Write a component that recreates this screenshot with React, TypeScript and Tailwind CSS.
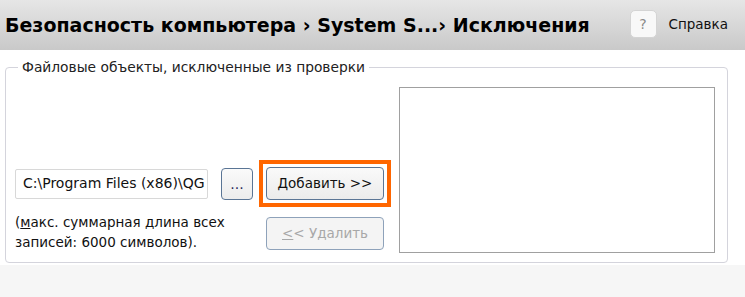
import React from "react";

export default function App() {
  const font = { fontFamily: "Tahoma, 'DejaVu Sans', sans-serif" };
  return (
    <div className="w-[745px] h-[297px] bg-[#f6f6f6] flex flex-col overflow-hidden" style={font}>
      <div className="h-[50px] bg-gradient-to-b from-[#e6e6e6] to-[#c9c9c9] flex items-center pl-[5px] pr-[17px]">
        <div className="text-[19px] font-bold text-black whitespace-nowrap">
          Безопасность компьютера › System S...› Исключения
        </div>
        <div className="ml-auto flex items-center gap-[12px] mt-[-2px]">
          <div className="w-[27px] h-[28px] rounded-[5px] border border-[#d4d4d4] bg-[#f8f8f8] flex items-center justify-center text-[14px] text-[#8a8a8a]">
            ?
          </div>
          <div className="text-[13.5px] text-[#111]">Справка</div>
        </div>
      </div>
      <div className="bg-white h-[215px] pl-[5px] pr-[17px] pt-[17px]">
        <div className="relative h-[196px] border border-[#d4d4dc] rounded-[4px] flex pl-[9px] pr-[12px] pt-[19px]">
          <div className="absolute left-[12px] top-[-10px] bg-white px-[4px] text-[13.8px] text-[#222] leading-[18px] whitespace-nowrap">
            Файловые объекты, исключенные из проверки
          </div>
          <div className="flex flex-col w-[380px] pt-[73px]">
            <div className="flex items-center">
              <div className="w-[193px] h-[30px] border border-[#d8d8d8] rounded-[2px] flex items-center pl-[7px] text-[14px] text-[#111] overflow-hidden whitespace-nowrap">
                C:\Program Files (x86)\QG
              </div>
              <div className="ml-[13px] w-[32px] h-[32px] rounded-[4px] border border-[#5a7595] bg-gradient-to-b from-[#fafafa] to-[#ececec] flex items-center justify-center text-[14px] text-[#2a2a5a] pt-[2px]">
                ...
              </div>
              <div className="ml-[6px] p-[4px] bg-[#ff6600]">
                <div className="bg-white p-[3px]">
                  <div className="w-[118px] h-[33px] rounded-[4px] border border-[#5a7595] bg-gradient-to-b from-[#fafafa] to-[#ebebeb] flex items-center justify-center text-[13.5px] text-[#111]">
                    <span><span className="underline">Д</span>обавить &gt;&gt;</span>
                  </div>
                </div>
              </div>
            </div>
            <div className="flex">
              <div className="w-[244px] text-[13.5px] text-[#111] leading-[20px] pt-[5px]">
                <span>(<span className="underline">м</span>акс. суммарная длина всех</span>
                <br />
                <span>записей: 6000 символов).</span>
              </div>
              <div className="ml-[7px] mt-[10px] w-[118px] h-[33px] rounded-[4px] border border-[#8ea2ba] bg-[#f4f4f4] flex items-center justify-center text-[13.5px] text-[#a8a8a8]">
                <span><span className="underline">&lt;</span>&lt; Удалить</span>
              </div>
            </div>
          </div>
          <div className="ml-[4px] w-[316px] h-[166px] border border-[#a0a0a0] bg-white" />
        </div>
      </div>
    </div>
  );
}
